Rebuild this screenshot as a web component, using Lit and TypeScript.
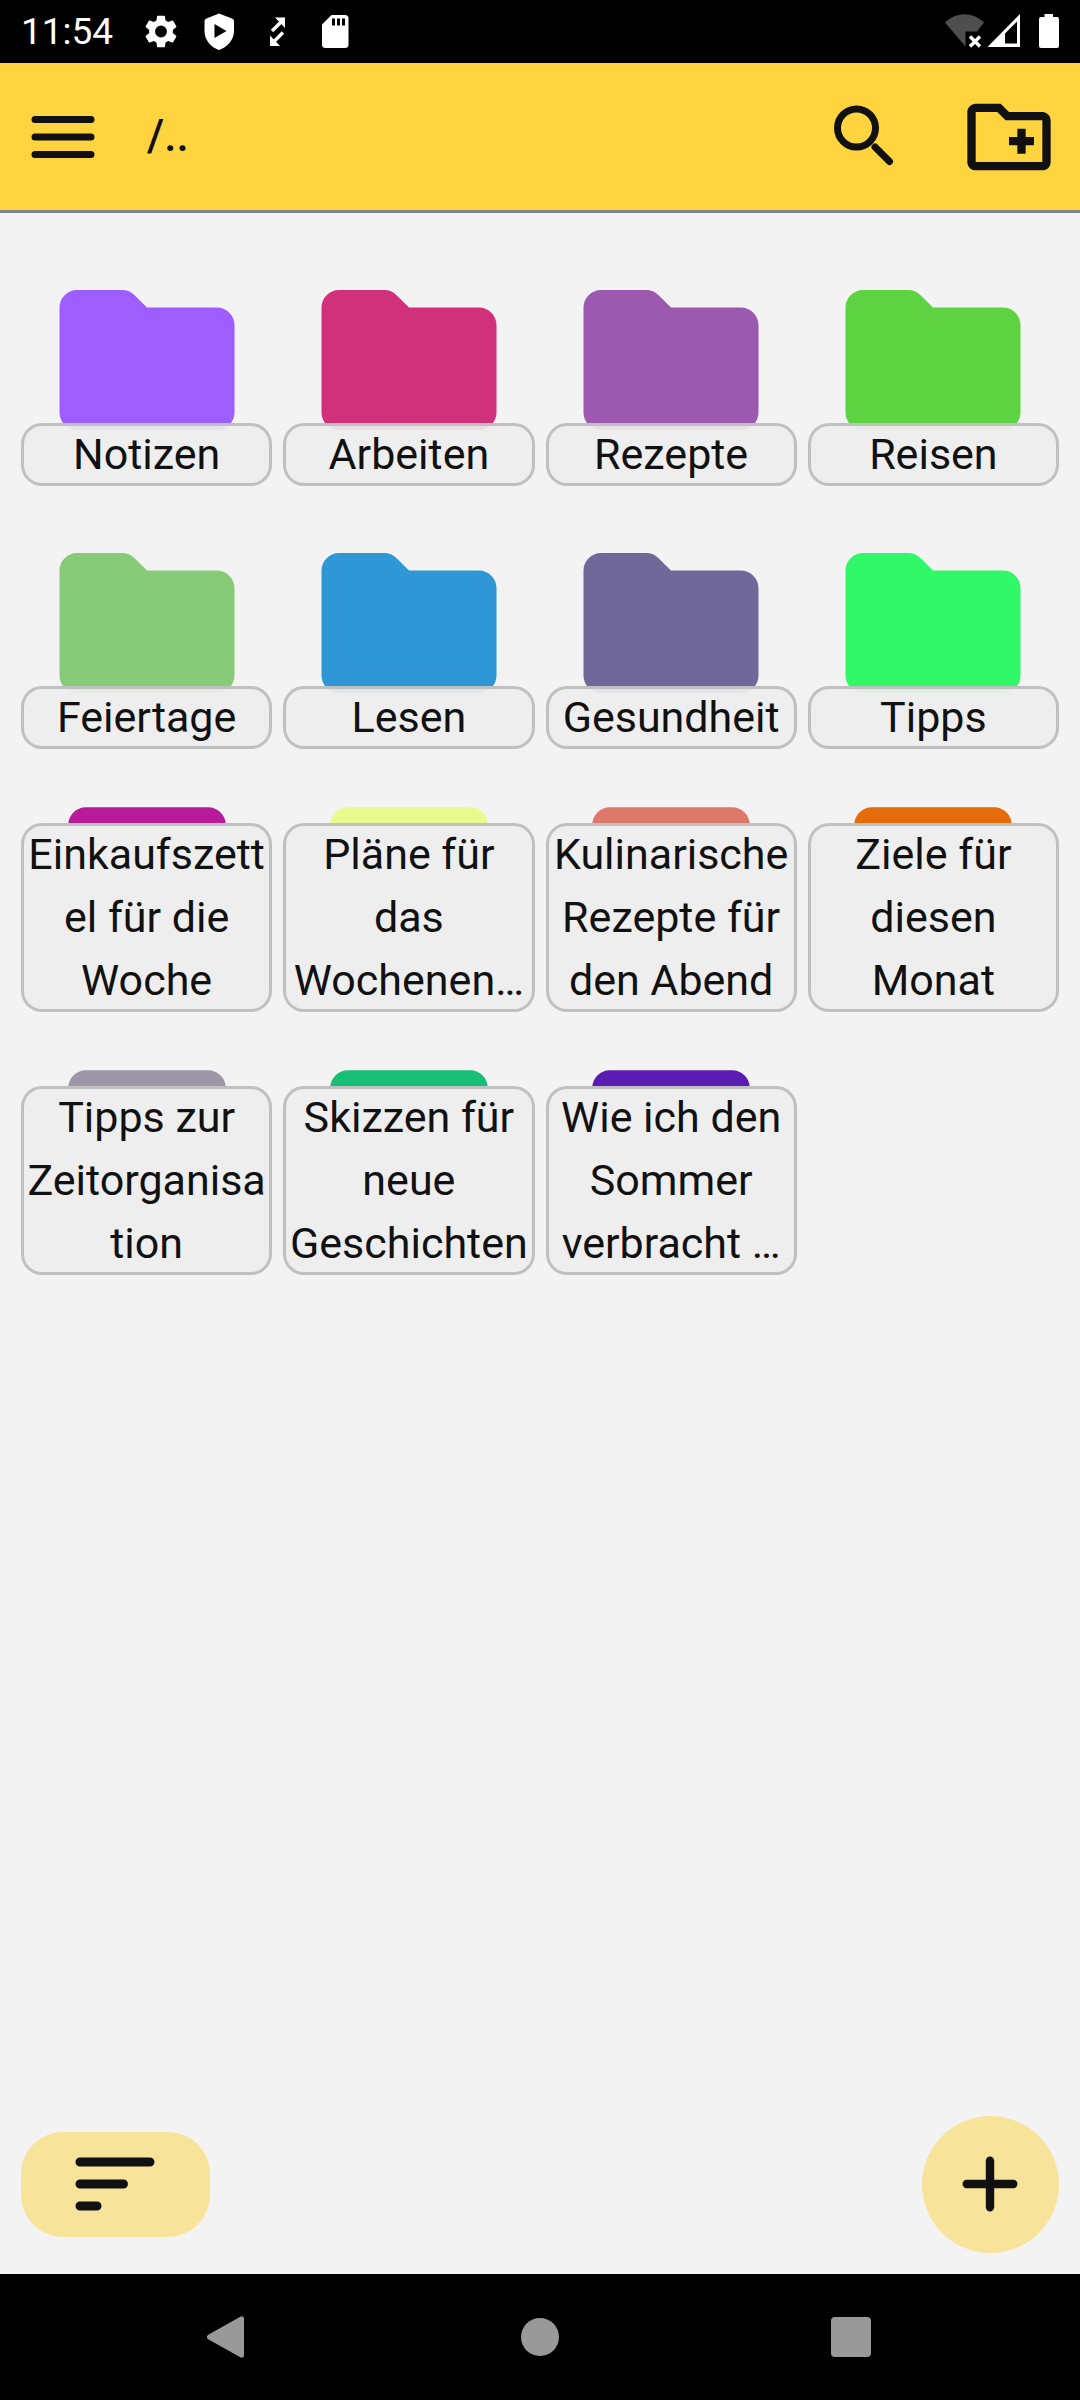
import { LitElement, html, svg, css } from "lit";
import { customElement, property } from "lit/decorators.js";

interface Entry {
  name: string;
  color: string;
  kind: "folder" | "note";
}

const ENTRIES: Entry[] = [
  { name: "Notizen", color: "#9e5dff", kind: "folder" },
  { name: "Arbeiten", color: "#d1307a", kind: "folder" },
  { name: "Rezepte", color: "#9b5ab0", kind: "folder" },
  { name: "Reisen", color: "#5dd341", kind: "folder" },
  { name: "Feiertage", color: "#87cb78", kind: "folder" },
  { name: "Lesen", color: "#2f97d5", kind: "folder" },
  { name: "Gesundheit", color: "#706898", kind: "folder" },
  { name: "Tipps", color: "#31f868", kind: "folder" },
  { name: "Einkaufszettel für die Woche", color: "#b81b99", kind: "note" },
  { name: "Pläne für das Wochenen…", color: "#e8fb8c", kind: "note" },
  { name: "Kulinarische Rezepte für den Abend", color: "#de7868", kind: "note" },
  { name: "Ziele für diesen Monat", color: "#e46c0a", kind: "note" },
  { name: "Tipps zur Zeitorganisation", color: "#9c98a9", kind: "note" },
  { name: "Skizzen für neue Geschichten", color: "#18be75", kind: "note" },
  { name: "Wie ich den Sommer verbracht …", color: "#5a1cb2", kind: "note" },
];

const SHAPES = {
  folder: svg`<path d="M9.17 4H4c-1.1 0-2 .9-2 2v12c0 1.1.9 2 2 2h16c1.1 0 2-.9 2-2V8c0-1.1-.9-2-2-2h-8l-1.42-1.41C10.21 4.21 9.7 4 9.17 4z"/>`,
  note: svg`<path d="M3 5c0-1.1.9-2 2-2h14c1.1 0 2 .9 2 2z"/>`,
};

@customElement("entry-tile")
export class EntryTile extends LitElement {
  @property({ attribute: false }) entry!: Entry;

  static styles = css`
    :host {
      display: block;
      min-width: 0;
    }
    .tile {
      display: grid;
      grid-template-columns: minmax(0, 1fr);
      width: 100%;
      padding: 0;
      border: 0;
      background: none;
      color: inherit;
      font: inherit;
      cursor: pointer;
    }
    .icon {
      grid-area: 1 / 1;
      justify-self: center;
      width: 210px;
      height: 210px;
      margin-bottom: 21px;
    }
    .name {
      grid-area: 1 / 1;
      align-self: end;
      z-index: 1;
      padding: 0 3px;
      border-radius: 21px;
      background: rgba(238, 238, 238, 0.92);
      box-shadow: inset 0 0 0 3px #c0c0c0;
      font-size: 43px;
      line-height: 63px;
      text-align: center;
      overflow-wrap: anywhere;
    }
  `;

  render() {
    const { name, color, kind } = this.entry;
    return html`
      <button class="tile" type="button">
        <svg class="icon" viewBox="0 0 24 24" fill=${color} aria-hidden="true">${SHAPES[kind]}</svg>
        <span class="name">${name}</span>
      </button>
    `;
  }
}

@customElement("status-bar")
export class StatusBar extends LitElement {
  static styles = css`
    :host {
      display: flex;
      align-items: center;
      justify-content: space-between;
      padding: 0 21px;
      background: #000;
      color: #fff;
    }
    .group {
      display: flex;
      align-items: center;
    }
    .time {
      margin-right: 27px;
      font-size: 37px;
      line-height: 63px;
    }
    .notices {
      display: flex;
      gap: 16px;
    }
    svg {
      display: block;
      height: 63px;
    }
    .slot {
      width: 42px;
    }
    .power {
      width: 30px;
    }
  `;

  render() {
    return html`
      <div class="group">
        <span class="time">11:54</span>
        <div class="notices">
          <svg class="slot" viewBox="0 0 42 63" fill="#fff" aria-hidden="true">
            <path transform="translate(1.2 11.7) scale(1.65)" d="M19.14 12.94c.04-.3.06-.61.06-.94 0-.32-.02-.64-.07-.94l2.03-1.58a.49.49 0 0 0 .12-.61l-1.92-3.32a.488.488 0 0 0-.59-.22l-2.39.96c-.5-.38-1.03-.7-1.62-.94l-.36-2.54a.484.484 0 0 0-.48-.41h-3.84c-.24 0-.43.17-.47.41l-.36 2.54c-.59.24-1.13.57-1.62.94l-2.39-.96c-.22-.08-.47 0-.59.22L2.74 8.87c-.12.21-.08.47.12.61l2.03 1.58c-.05.3-.09.63-.09.94s.02.64.07.94l-2.03 1.58a.49.49 0 0 0-.12.61l1.92 3.32c.12.22.37.29.59.22l2.39-.96c.5.38 1.03.7 1.62.94l.36 2.54c.05.24.24.41.48.41h3.84c.24 0 .44-.17.47-.41l.36-2.54c.59-.24 1.13-.56 1.62-.94l2.39.96c.22.08.47 0 .59-.22l1.92-3.32c.12-.22.07-.47-.12-.61l-2.01-1.58zM12 15.6A3.6 3.6 0 1 1 12 8.4a3.6 3.6 0 0 1 0 7.2z"/>
          </svg>
          <svg class="slot" viewBox="0 0 42 63" aria-hidden="true">
            <path fill="#fff" d="M21 13.5L34 18.5Q36 19.3 36 21V31C36 40 29 47.5 21 50C13 47.5 6.5 40 6.5 31V21Q6.5 19.3 8.5 18.5Z"/>
            <path d="M16.5 24L28.5 31L16.5 38Z"/>
          </svg>
          <svg class="slot" viewBox="0 0 42 63" fill="#fff" stroke="#fff" aria-hidden="true">
            <path stroke="none" d="M19 17.5H29V28ZM14 35.5V46H24Z"/>
            <path stroke-width="3.4" d="M26.500 20.500L16 31M16.500 43L27 32.500"/>
          </svg>
          <svg class="slot" viewBox="0 0 42 63" aria-hidden="true">
            <path fill="#fff" d="M17.5 15H31Q34.500 15 34.500 18.500V44.500Q34.500 48 31 48H11.500Q8 48 8 44.500V24.500Z"/>
            <path d="M18 18.500h3v7h-3zM23 18.500h3v7h-3zM28 18.500h3v7h-3z"/>
          </svg>
        </div>
      </div>
      <div class="group">
        <svg class="slot" viewBox="0 0 42 63" aria-hidden="true">
          <path fill="#4e4e4e" d="M0 22.500C11.500 11.500 27.500 11.500 39 22.500L32 31.500H20.500V46.500Z"/>
          <path stroke="#fff" stroke-width="3.400" d="M25 36.500L35 46.500M35 36.500L25 46.500"/>
        </svg>
        <svg class="slot" viewBox="0 0 42 63" aria-hidden="true">
          <path fill="#fff" fill-rule="evenodd" d="M33 14V47H0.500ZM30 21.500L18 33.500V43.500H30Z"/>
        </svg>
        <svg class="power" viewBox="0 0 30 63" aria-hidden="true">
          <path fill="#fff" d="M15.500 14H24V17H28Q30 17 30 19V46Q30 48 28 48H12Q10 48 10 46V19Q10 17 12 17H15.500Z"/>
        </svg>
      </div>
    `;
  }
}

@customElement("app-root")
export class AppRoot extends LitElement {
  static styles = css`
    :host {
      display: flex;
      flex-direction: column;
      min-height: 100vh;
      background: #f3f3f3;
      color: #111;
      font-family: Roboto, "Noto Sans", sans-serif;
    }
    button {
      display: grid;
      place-items: center;
      padding: 0;
      border: 0;
      background: none;
      color: inherit;
      cursor: pointer;
    }
    svg {
      display: block;
    }
    .header {
      display: flex;
      align-items: center;
      min-height: 147px;
      padding: 0 21px;
      background: #ffd43f;
      border-bottom: 3px solid #7c8587;
    }
    .menu {
      width: 84px;
      height: 84px;
      margin-right: 42px;
    }
    .path {
      flex: 1;
      margin: 0;
      font-size: 44px;
      font-weight: 500;
      line-height: 63px;
    }
    .tools {
      display: flex;
      align-items: center;
      gap: 46px;
    }
    .tool {
      width: 100px;
      height: 100px;
    }
    .entries {
      display: grid;
      grid-template-columns: repeat(4, minmax(0, 1fr));
      gap: 32px 11px;
      margin: 0;
      padding: 42px 21px;
      list-style: none;
    }
    .actions {
      display: flex;
      align-items: center;
      justify-content: space-between;
      margin-top: auto;
      padding: 21px;
    }
    .sort {
      width: 189px;
      height: 105px;
      border-radius: 42px;
      background: #f8e39b;
    }
    .add {
      width: 137px;
      height: 137px;
      border-radius: 50%;
      background: #f8e39b;
    }
    .nav {
      display: grid;
      grid-template-columns: repeat(3, 1fr);
      padding: 0 72px;
      background: #000;
      color: #999;
    }
    .key {
      height: 126px;
    }
  `;

  render() {
    return html`
      <status-bar></status-bar>
      <header class="header">
        <button class="menu" type="button" aria-label="Menü">
          <svg width="84" height="84" viewBox="0 0 84 84" stroke="currentColor" stroke-width="7" stroke-linecap="round">
            <path d="M14 24.500H70M14 42H70M14 59.500H70"/>
          </svg>
        </button>
        <h1 class="path">/..</h1>
        <div class="tools">
          <button class="tool" type="button" aria-label="Suchen">
            <svg width="100" height="100" viewBox="0 0 100 100" fill="none" stroke="currentColor" stroke-width="7">
              <circle cx="43.500" cy="41" r="19"/>
              <path stroke-linecap="round" d="M62 60L76.500 74.500"/>
            </svg>
          </button>
          <button class="tool" type="button" aria-label="Neuer Ordner">
            <svg width="100" height="100" viewBox="0 0 24 24" fill="currentColor">
              <path d="M20 6h-8l-2-2H4c-1.110 0-2 .89-2 2v12c0 1.110.89 2 2 2h16c1.110 0 2-.89 2-2V8c0-1.110-.89-2-2-2zm0 12H4V6h5.170l2 2H20v10zm-8-4h2v2h2v-2h2v-2h-2v-2h-2v2h-2z"/>
            </svg>
          </button>
        </div>
      </header>
      <main>
        <ul class="entries">
          ${ENTRIES.map((entry) => html`<li><entry-tile .entry=${entry}></entry-tile></li>`)}
        </ul>
      </main>
      <div class="actions">
        <button class="sort" type="button" aria-label="Sortieren">
          <svg width="81" height="55" viewBox="0 0 81 55" stroke="currentColor" stroke-width="9" stroke-linecap="round">
            <path d="M5 5H75M5 27H48.500M5 49H22"/>
          </svg>
        </button>
        <button class="add" type="button" aria-label="Hinzufügen">
          <svg width="57" height="57" viewBox="0 0 57 57" stroke="currentColor" stroke-width="8.400" stroke-linecap="round">
            <path d="M28 4.700V51.300M4.700 28H51.300"/>
          </svg>
        </button>
      </div>
      <nav class="nav" aria-label="System">
        <button class="key" type="button" aria-label="Zurück">
          <svg width="42" height="42" viewBox="0 0 42 42" fill="currentColor" stroke="currentColor" stroke-width="5" stroke-linejoin="round">
            <path d="M2.500 21L34.500 2.800V39.200Z"/>
          </svg>
        </button>
        <button class="key" type="button" aria-label="Startseite">
          <svg width="42" height="42" viewBox="0 0 42 42" fill="currentColor"><circle cx="21" cy="21" r="19"/></svg>
        </button>
        <button class="key" type="button" aria-label="Übersicht">
          <svg width="42" height="42" viewBox="0 0 42 42" fill="currentColor"><rect x="0" y="1" width="40" height="40" rx="4"/></svg>
        </button>
      </nav>
    `;
  }
}
